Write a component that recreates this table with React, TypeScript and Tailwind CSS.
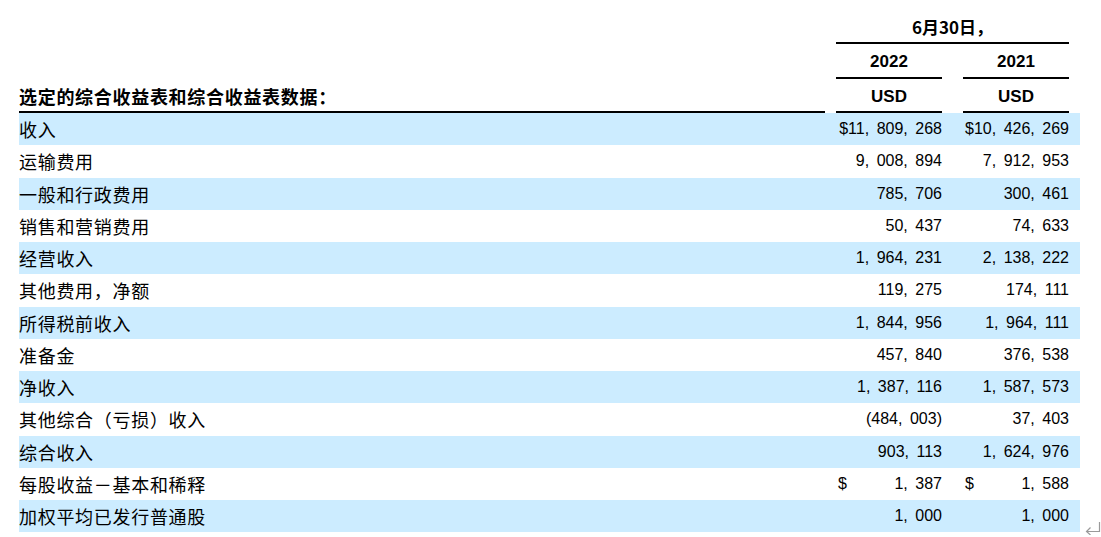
import React from 'react';

// ── Data ──────────────────────────────────────────────────────────────────────

interface Row {
  label: string;
  y2022: string;
  y2021: string;
  dollar?: 'inline' | 'split';
}

const rows: Row[] = [
  { label: '收入', y2022: '11,809,268', y2021: '10,426,269', dollar: 'inline' },
  { label: '运输费用', y2022: '9,008,894', y2021: '7,912,953' },
  { label: '一般和行政费用', y2022: '785,706', y2021: '300,461' },
  { label: '销售和营销费用', y2022: '50,437', y2021: '74,633' },
  { label: '经营收入', y2022: '1,964,231', y2021: '2,138,222' },
  { label: '其他费用，净额', y2022: '119,275', y2021: '174,111' },
  { label: '所得税前收入', y2022: '1,844,956', y2021: '1,964,111' },
  { label: '准备金', y2022: '457,840', y2021: '376,538' },
  { label: '净收入', y2022: '1,387,116', y2021: '1,587,573' },
  { label: '其他综合（亏损）收入', y2022: '(484,003)', y2021: '37,403' },
  { label: '综合收入', y2022: '903,113', y2021: '1,624,976' },
  { label: '每股收益－基本和稀释', y2022: '1,387', y2021: '1,588', dollar: 'split' },
  { label: '加权平均已发行普通股', y2022: '1,000', y2021: '1,000' },
];

const cjk = "font-['Noto_Sans_CJK_SC',sans-serif]";
const num = "font-['Liberation_Sans','Noto_Sans_CJK_SC',sans-serif]";
const narrow = "font-['Liberation_Sans_Narrow','Liberation_Sans','Noto_Sans_CJK_SC',sans-serif]";

// numbers in the source render with a wide comma
function Num({ value }: { value: string }) {
  const parts = value.split(',');
  return (
    <>
      {parts.map((p, i) => (
        <React.Fragment key={i}>
          {p}
          {i < parts.length - 1 && <span className="mr-[7.5px]">,</span>}
        </React.Fragment>
      ))}
    </>
  );
}

function Cell({ value, dollar }: { value: string; dollar?: Row['dollar'] }) {
  if (dollar === 'split') {
    return (
      <div className={`flex items-center justify-between pl-[2px] text-[16px] text-black ${num}`}>
        <span>$</span>
        <span>
          <Num value={value} />
        </span>
      </div>
    );
  }
  return (
    <div className={`text-right text-[16px] text-black ${num}`}>
      {dollar === 'inline' && <span>$</span>}
      <Num value={value} />
    </div>
  );
}

// Word-style paragraph mark
function ReturnMark() {
  return (
    <svg
      className="absolute left-[1085px] top-[521px]"
      width="16"
      height="14"
      viewBox="0 0 16 14"
      fill="none"
      stroke="#9a9a9a"
      strokeWidth="1.2"
    >
      <path d="M14.5 1 V10.5 H1.5" />
      <path d="M5.5 6.5 L1.5 10.5 L5.5 14" />
    </svg>
  );
}

// ── Page ──────────────────────────────────────────────────────────────────────

export default function App() {
  return (
    <div className="relative h-[537px] w-[1101px] overflow-hidden bg-white pl-[19px] pt-[9px]">
      <div className="w-[1061px]">
        {/* header */}
        <div className="grid grid-cols-[817px_106px_21px_106px_11px]">
          <div className="row-span-3 flex items-end">
            <div className="mr-[11px] flex-1 border-b-2 border-black pb-[1px]">
              <span className={`text-[18px] font-bold tracking-[0.7px] text-black ${cjk}`}>
                选定的综合收益表和综合收益表数据：
              </span>
            </div>
          </div>
          <div className="col-span-3 flex h-[35px] items-center justify-center border-b-2 border-black pt-[2px]">
            <span className={`text-[17px] font-bold text-black ${cjk}`}>6月30日，</span>
          </div>
          <div />
          <div className={`col-start-2 flex h-[35px] items-center justify-center border-b-2 border-black pt-[3px] text-[17px] font-bold ${narrow}`}>
            2022
          </div>
          <div />
          <div className={`flex h-[35px] items-center justify-center border-b-2 border-black pt-[3px] text-[17px] font-bold ${narrow}`}>
            2021
          </div>
          <div />
          <div className={`col-start-2 flex h-[34px] items-center justify-center border-b-2 border-black pt-[3px] text-[17px] font-bold ${narrow}`}>
            USD
          </div>
          <div />
          <div className={`flex h-[34px] items-center justify-center border-b-2 border-black pt-[3px] text-[17px] font-bold ${narrow}`}>
            USD
          </div>
          <div />
        </div>

        {/* body */}
        <div className="flex flex-col">
          {rows.map((r, i) => (
            <div
              key={r.label}
              className={`grid h-[32.25px] grid-cols-[817px_106px_21px_106px_11px] items-center ${
                i % 2 === 0 ? 'bg-[#ccecff]' : 'bg-white'
              }`}
            >
              <div className={`text-[18px] leading-none tracking-[0.7px] text-black ${cjk}`}>{r.label}</div>
              <Cell value={r.y2022} dollar={r.dollar} />
              <div />
              <Cell value={r.y2021} dollar={r.dollar} />
              <div />
            </div>
          ))}
        </div>
      </div>

      <ReturnMark />
    </div>
  );
}
